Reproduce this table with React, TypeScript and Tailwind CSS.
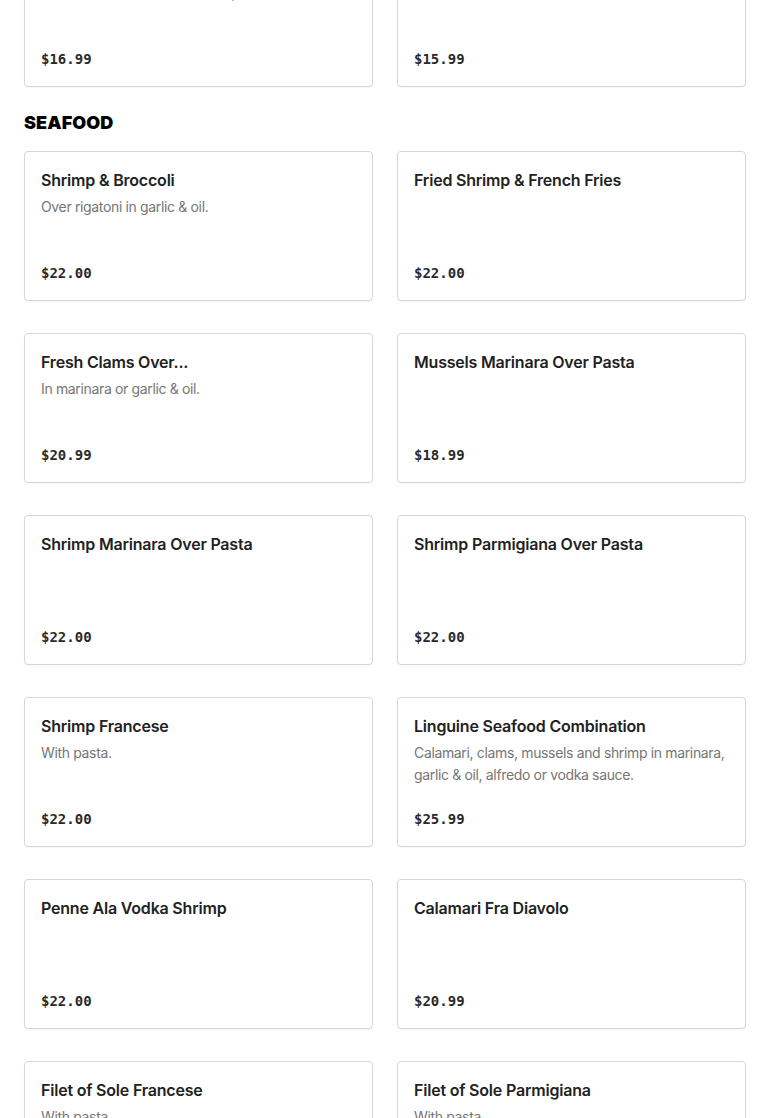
type Item = { name: string; desc?: string; price: string };

const prev: Item[] = [
  { name: "Chicken Parmigiana", desc: "Baked with mozzarella cheese,", price: "$16.99" },
  { name: "Chicken Francese", price: "$15.99" },
];

const seafood: Item[] = [
  { name: "Shrimp & Broccoli", desc: "Over rigatoni in garlic & oil.", price: "$22.00" },
  { name: "Fried Shrimp & French Fries", price: "$22.00" },
  { name: "Fresh Clams Over...", desc: "In marinara or garlic & oil.", price: "$20.99" },
  { name: "Mussels Marinara Over Pasta", price: "$18.99" },
  { name: "Shrimp Marinara Over Pasta", price: "$22.00" },
  { name: "Shrimp Parmigiana Over Pasta", price: "$22.00" },
  { name: "Shrimp Francese", desc: "With pasta.", price: "$22.00" },
  {
    name: "Linguine Seafood Combination",
    desc: "Calamari, clams, mussels and shrimp in marinara, garlic & oil, alfredo or vodka sauce.",
    price: "$25.99",
  },
  { name: "Penne Ala Vodka Shrimp", price: "$22.00" },
  { name: "Calamari Fra Diavolo", price: "$20.99" },
  { name: "Filet of Sole Francese", desc: "With pasta.", price: "$22.00" },
  { name: "Filet of Sole Parmigiana", desc: "With pasta.", price: "$22.00" },
];

const Card = ({ item }: { item: Item }) => (
  <div className="h-[150px] flex flex-col border border-[#d6d6d6] rounded-[4px] bg-white p-4 shadow-[0_1px_2px_rgba(0,0,0,0.04)]">
    <h3 className="font-['Inter',sans-serif] font-semibold text-[16px] leading-6 tracking-[-0.2px] text-[#222222]">
      {item.name}
    </h3>
    {item.desc && (
      <p className="mt-1 font-['Inter',sans-serif] text-[14px] leading-[22px] tracking-[-0.35px] text-[#767676]">
        {item.desc}
      </p>
    )}
    <div className="mt-auto mb-px font-['DejaVu_Sans_Mono',monospace] font-bold text-[14px] leading-5 text-[#2a2a2a]">
      {item.price}
    </div>
  </div>
);

export default function App() {
  return (
    <div className="w-full min-h-screen bg-white px-6 mt-[-63px]">
      <div className="grid grid-cols-2 gap-x-6 gap-y-8">
        {prev.map((item) => (
          <Card key={item.name} item={item} />
        ))}
      </div>
      <h2 className="mt-[22px] mb-[14px] font-['Inter',sans-serif] font-black text-[18px] leading-7 tracking-[0.1px] text-black">
        SEAFOOD
      </h2>
      <div className="grid grid-cols-2 gap-x-6 gap-y-8">
        {seafood.map((item) => (
          <Card key={item.name} item={item} />
        ))}
      </div>
    </div>
  );
}
